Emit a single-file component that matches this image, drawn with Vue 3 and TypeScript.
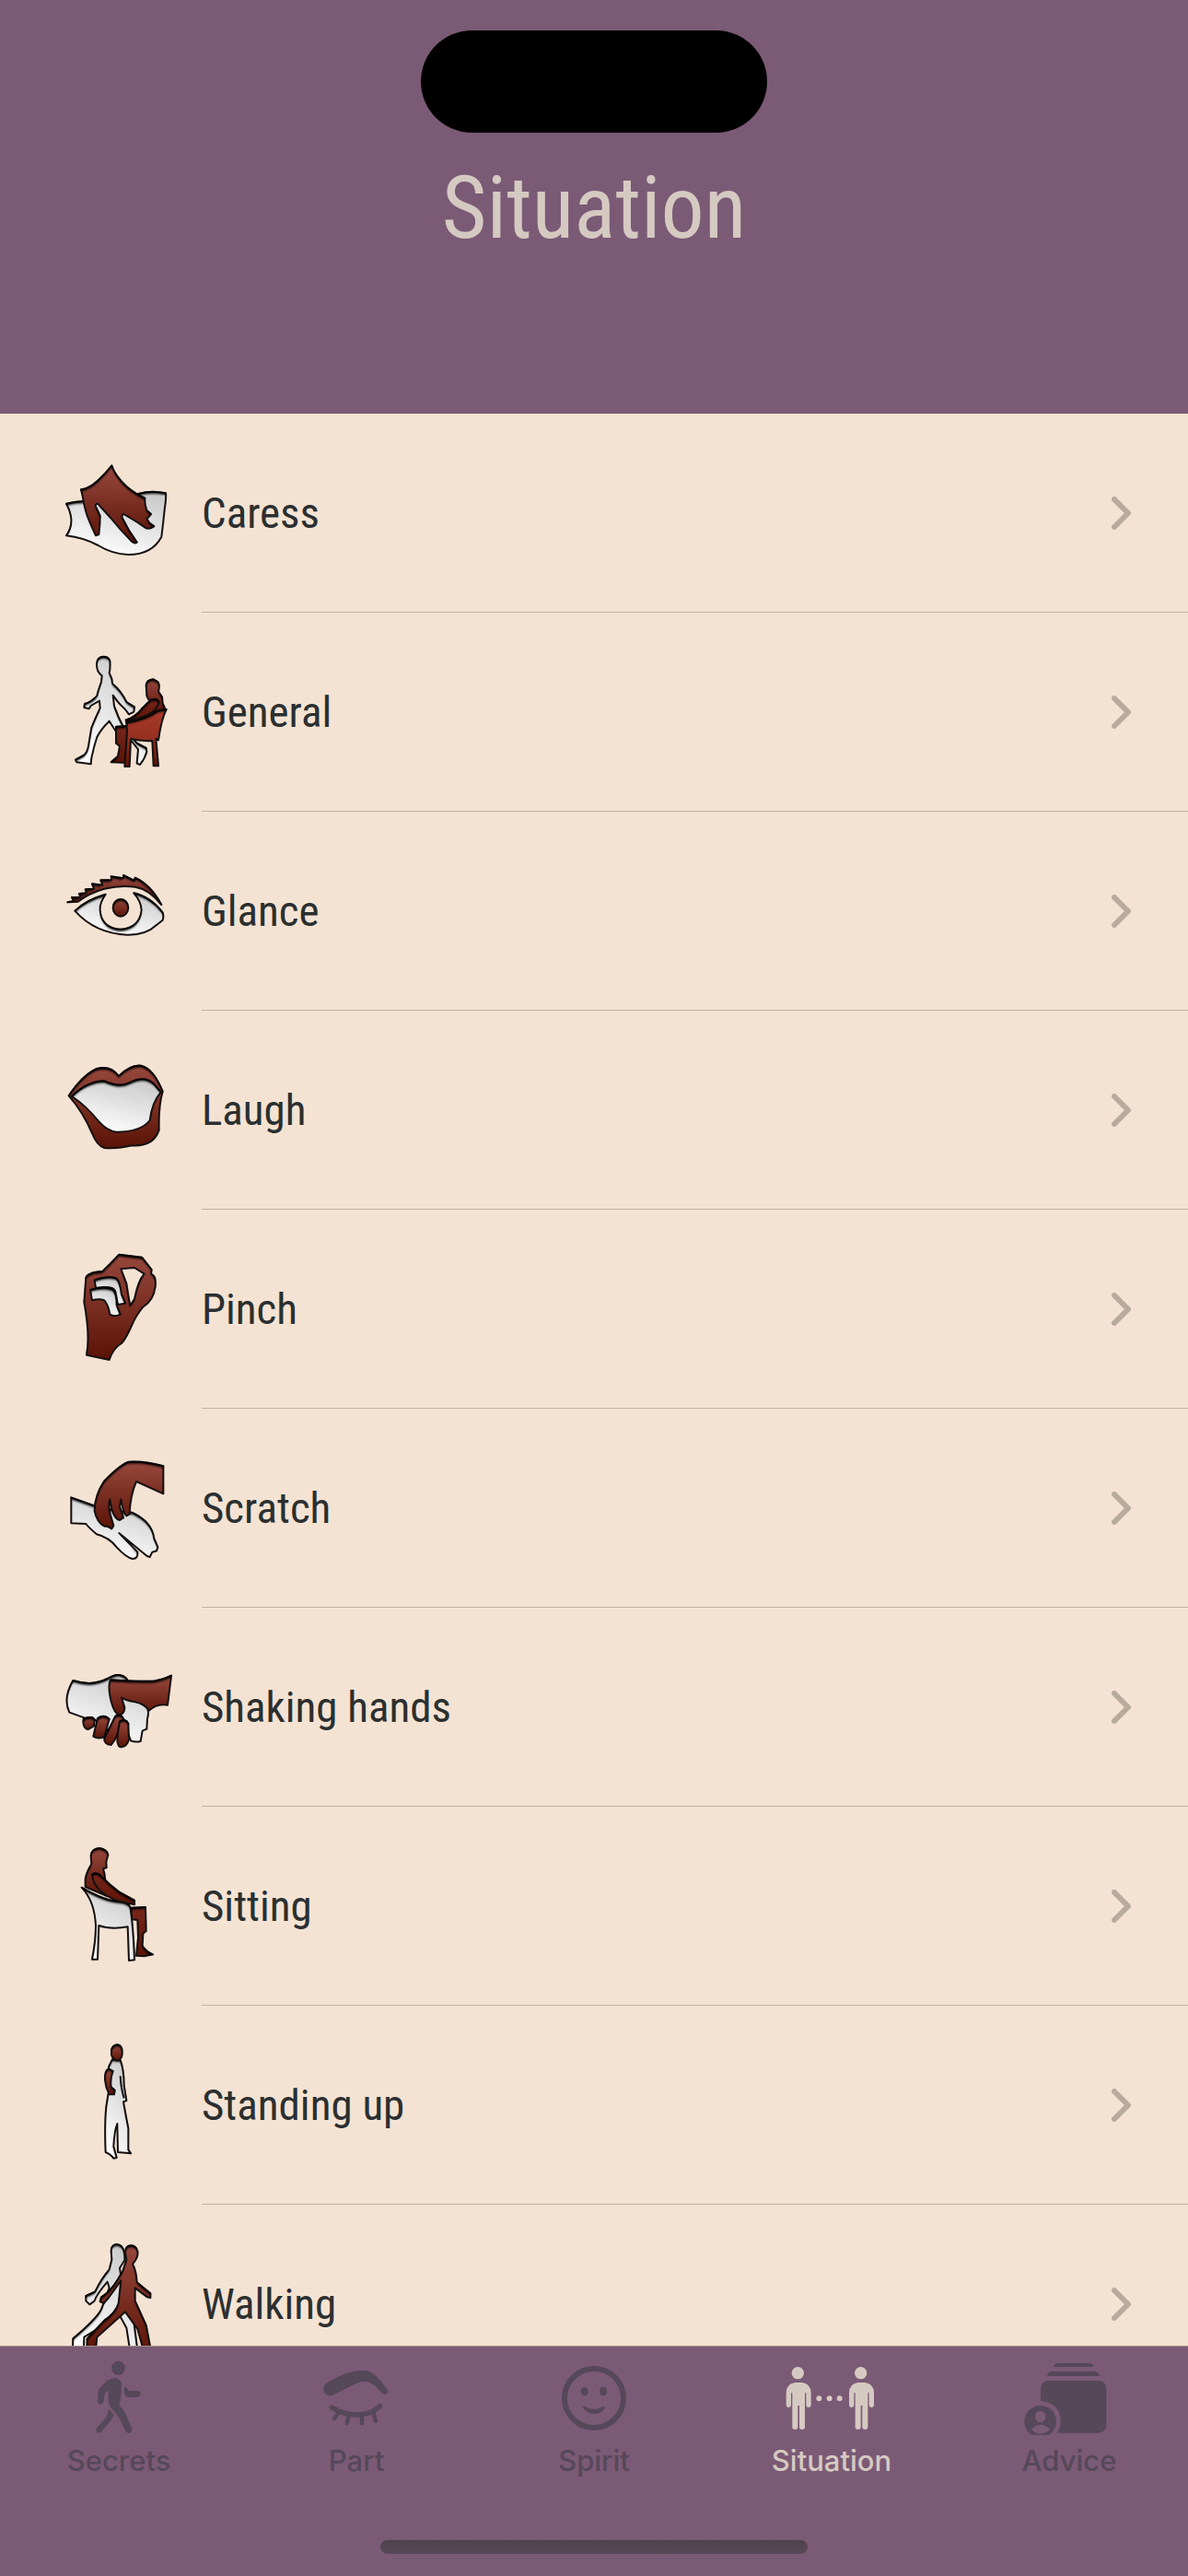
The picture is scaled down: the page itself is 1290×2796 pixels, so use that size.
<script setup lang="ts">
import { ref } from 'vue'

type Paint = 'brown' | 'white' | 'red' | 'deep' | 'line'
interface Shape { paint: Paint; d: string }
interface Situation { name: string; top: number; shapes: Shape[] }
interface Tab { name: string; box: string; d: string; strokes?: { d: string; w: number }[] }

// Illustrations are drawn on a 480 x 648 grid; `top` is the first grid line of each one.
const situations: Situation[] = [
  {
    name: 'Caress', top: -93, shapes: [
      { paint: 'white', d: 'M66 200 Q90 194 120 192 L300 168 Q345 156 390 166 Q392 180 386 220 Q382 260 376 308 Q345 366 268 366 Q215 364 170 336 Q120 310 66 304 Q84 280 82 250 Q80 225 66 200Z' },
      { paint: 'brown', d: 'M214 76 Q225 110 262 144 Q290 168 322 182 Q320 200 328 222 L342 234 Q336 244 328 248 L336 262 L352 274 Q340 284 326 280 L300 262 Q270 244 252 234 Q246 236 248 246 L272 290 L296 326 Q290 332 280 324 Q240 284 210 246 L168 200 Q160 200 162 210 L176 240 Q176 270 172 300 L162 304 Q150 280 134 240 Q122 200 120 180 L114 154 Q140 152 170 124 Q195 100 214 76Z' },
    ],
  },
  {
    name: 'General', top: 555, shapes: [
      { paint: 'white', d: 'M186 698 Q166 700 165 722 Q164 748 182 760 L180 780 L170 810 L166 826 Q150 844 126 852 L124 864 L140 868 L146 858 L174 842 L176 866 Q160 900 148 930 L138 990 Q134 1012 122 1020 L96 1034 L100 1042 L146 1048 L148 1028 Q156 990 166 960 Q178 935 206 908 Q220 930 230 945 Q255 955 280 975 L300 1000 L296 1046 L306 1050 Q322 1030 328 1008 L326 996 L296 980 Q270 950 256 935 Q236 900 222 860 L218 824 Q235 850 258 870 L270 886 L286 878 L288 862 L262 846 Q245 810 216 786 L214 770 L206 752 Q210 735 208 712 Q204 698 186 698Z' },
      { paint: 'brown', d: 'M350 772 Q328 774 326 790 L328 826 L334 838 L344 840 Q350 870 350 880 L388 868 L380 850 L378 830 L366 812 Q372 790 364 780Z' },
      { paint: 'deep', d: 'M228 926 L266 924 L262 1044 L212 1042 L234 1022 L240 990 L228 980Z' },
      { paint: 'red', d: 'M262 912 Q330 900 364 874 L392 870 Q376 900 366 970 L358 966 L366 1054 L350 1054 L346 972 Q310 974 276 966 L272 1056 L256 1056 L264 940Z' },
      { paint: 'deep', d: 'M340 840 Q358 830 368 845 Q366 862 345 880 Q320 895 285 902 L262 912 L260 904 Q290 895 310 870Z' },
    ],
  },
  {
    name: 'Glance', top: -57, shapes: [
      { paint: 'brown', d: 'M70 238 L90 234 L84 222 L112 222 L108 210 L132 208 L128 196 L156 194 L150 178 L184 182 L178 166 L214 166 L212 154 L252 160 L252 150 L288 168 L290 158 Q340 180 376 246 Q335 195 290 188 Q240 182 190 194 Q140 208 104 236Z' },
      { paint: 'white', d: 'M94 266 Q130 230 194 212 Q174 240 176 264 Q180 322 242 326 Q305 322 311 264 Q310 235 286 208 Q340 220 380 272 Q384 284 380 296 L360 312 Q325 345 265 344 Q160 340 94 266Z' },
      { paint: 'brown', d: 'M218 256 A25 28 0 0 1 268 256 A25 28 0 0 1 218 256Z' },
    ],
  },
  {
    name: 'Laugh', top: 591, shapes: [
      { paint: 'brown', d: 'M74 868 Q120 800 165 780 Q210 768 237 804 Q275 766 310 770 Q350 780 380 854 Q366 900 368 980 Q350 1034 280 1030 Q230 1042 190 1038 Q165 1030 150 990 Q120 920 74 868Z' },
      { paint: 'white', d: 'M84 870 Q135 820 190 820 Q240 842 270 826 Q320 800 350 828 L374 856 Q345 890 338 948 Q310 985 230 986 Q200 984 170 950 Q130 900 84 870Z' },
    ],
  },
  {
    name: 'Pinch', top: -51, shapes: [
      { paint: 'brown', d: 'M238 95 L312 104 L344 144 L342 158 Q360 165 356 200 Q350 245 316 266 Q295 290 280 324 Q262 365 248 382 Q218 400 206 438 L132 422 Q140 380 134 320 Q130 280 124 250 L130 170 Q138 152 184 150 Q210 125 238 95Z M244 142 L288 138 L320 158 Q300 180 288 240 L274 262 Q268 230 262 190Z' },
      { paint: 'white', d: 'M158 178 Q200 164 228 172 Q240 180 246 225 L258 254 L234 258 L226 215 Q220 195 162 204Z' },
      { paint: 'white', d: 'M144 210 Q190 198 216 208 Q230 220 230 260 L242 290 Q222 300 208 290 Q204 262 190 244 Q175 238 150 244Z' },
    ],
  },
  {
    name: 'Scratch', top: 597, shapes: [
      { paint: 'white', d: 'M82 886 L160 914 L230 930 L280 935 Q345 965 352 1020 L364 1048 L360 1060 L346 1064 L338 1080 Q328 1078 318 1068 L238 1002 L298 1064 Q300 1086 282 1086 Q262 1082 230 1048 Q205 1016 165 1006 Q140 985 130 972 L82 970Z' },
      { paint: 'brown', d: 'M382 784 Q320 766 270 770 Q245 776 190 832 Q158 880 158 930 Q166 968 190 980 Q200 978 214 988 L220 978 L206 930 Q204 900 208 892 L214 925 Q225 958 240 960 L252 952 L240 915 L244 892 Q252 940 262 946 L272 940 Q274 880 294 834 L382 874Z' },
    ],
  },
  {
    name: 'Shaking hands', top: 555, shapes: [
      { paint: 'white', d: 'M88 792 Q150 812 200 786 Q240 762 262 786 L330 880 Q336 900 330 915 L328 950 L314 956 L308 990 Q290 994 276 988 L262 950 L240 905 L200 955 L150 912 L126 914 L76 896 Q54 850 88 792Z' },
      { paint: 'brown', d: 'M210 790 Q310 796 350 794 Q385 788 408 776 L396 872 Q360 866 336 890 Q320 868 290 862 Q262 858 246 848 L256 880 Q256 900 240 905 Q222 900 212 860 Q200 810 210 790Z' },
      { paint: 'brown', d: 'M122 918 Q150 905 158 920 L156 940 L136 952 Q118 945 122 918Z' },
      { paint: 'brown', d: 'M168 915 Q190 900 206 918 L190 975 Q170 984 154 974Z' },
      { paint: 'brown', d: 'M226 908 Q245 898 254 920 L224 985 L212 1002 Q188 1000 190 980Z' },
      { paint: 'brown', d: 'M240 925 Q260 915 268 932 L270 985 Q262 1012 240 1008 Q228 1000 234 960Z' },
    ],
  },
  {
    name: 'Sitting', top: -57, shapes: [
      { paint: 'brown', d: 'M172 78 Q148 80 146 104 L148 130 Q130 160 128 180 L128 204 L200 235 L190 160 L186 145 L197 142 L196 122 L202 100 Q198 80 172 78Z' },
      { paint: 'deep', d: 'M278 272 L324 270 L326 348 L316 356 L314 396 Q325 415 348 424 L320 430 L294 428 L300 370 L298 312 L278 310Z' },
      { paint: 'white', d: 'M116 206 Q190 250 240 252 Q268 255 274 270 Q284 330 288 442 L270 444 L266 334 Q210 344 172 330 L168 440 L150 440 Q162 380 162 330 Q158 250 116 206Z' },
      { paint: 'deep', d: 'M150 164 Q166 154 180 170 Q210 200 240 222 L288 248 L288 262 L270 258 Q210 248 180 220 Q150 190 150 164Z' },
    ],
  },
  {
    name: 'Standing up', top: 591, shapes: [
      { paint: 'white', d: 'M216 766 L242 768 Q254 800 254 850 L262 900 L252 904 Q260 950 268 990 L268 1060 L276 1072 Q255 1070 234 1068 L232 975 Q222 1000 220 1050 L230 1086 L220 1088 Q212 1076 194 1068 Q190 980 196 920 L204 870 L204 790Z' },
      { paint: 'line', d: 'M242 820 Q244 860 254 892' },
      { paint: 'brown', d: 'M232 718 Q212 720 212 745 Q214 766 232 770 Q250 764 248 742 Q248 720 232 718Z' },
      { paint: 'brown', d: 'M204 796 L218 804 Q208 830 212 856 L224 866 L222 880 L206 880 Q190 850 192 820 Q194 800 204 796Z' },
    ],
  },
  {
    name: 'Walking', top: -21, shapes: [
      { paint: 'white', d: 'M230 108 Q212 110 212 130 L214 158 L206 190 Q180 220 160 262 L130 276 L130 292 L142 304 L158 292 Q164 272 200 230 L206 250 L180 320 Q165 350 88 415 L86 470 L122 470 L124 410 L190 370 L240 340 L262 380 L276 470 L300 470 L286 360 L250 250 L240 185 L256 160 Q258 110 230 108Z' },
      { paint: 'brown', d: 'M275 112 Q258 114 258 135 L262 158 L250 195 L232 225 Q210 262 180 280 L176 294 L188 300 L204 282 L244 226 L236 300 Q228 330 190 356 L134 415 L132 470 L160 470 L166 410 L258 328 L298 384 L322 470 L345 470 L326 372 L290 292 L290 250 L330 280 L340 282 L340 268 L296 232 Q294 195 282 172 Q302 150 298 130 Q292 110 275 112Z' },
    ],
  },
]

const person = (x: number): string =>
  `M${x - 20} 107 a20 20 0 1 1 40 0 a20 20 0 1 1 -40 0Z ` +
  `M${x - 14} 138 h28 q29 4 29 34 V210 q0 9 -8 9 q-8 0 -8 -9 V172 h-4 V283 q0 8 -9 8 q-9 0 -9 -8 V213 h-5 V283 q0 8 -9 8 q-9 0 -9 -8 V172 h-4 V210 q0 9 -8 9 q-8 0 -8 -9 V172 q0 -30 29 -34Z`
const dot = (x: number): string => `M${x - 9} 190 a9 9 0 1 1 18 0 a9 9 0 1 1 -18 0Z`

const tabs: Tab[] = [
  {
    name: 'Secrets', box: '207 21 360 288',
    d: 'M363 91 a22.5 22.5 0 1 1 45 0 a22.5 22.5 0 1 1 -45 0Z M350 131 Q375 115 390 130 Q397 136 396 150 L393 192 Q390 206 388 212 Q400 222 408 238 L430 288 Q432 302 418 303 Q411 302 408 295 L386 250 L360 218 Q352 208 353 195 L354 164 L341 173 L337 202 Q334 210 327 209 Q318 208 318 200 L320 168 Q322 160 328 154 Q340 140 350 131Z M405 149 L421 165 H448 Q458 166 458 175 Q457 185 448 186 H420 Q404 184 405 168Z M354 223 L371 244 Q368 254 362 260 L331 298 Q324 305 316 300 Q310 294 315 286 L344 254 Q352 240 354 223Z',
  },
  {
    name: 'Part', box: '981 21 360 288',
    d: 'M1064 139 Q1130 98 1185 98 Q1212 100 1232 124 Q1248 140 1263 163 Q1266 176 1254 177 Q1247 177 1240 168 Q1214 137 1192 135 Q1172 134 1146 148 L1090 176 Q1070 187 1058 173 Q1047 152 1064 139Z',
    strokes: [
      { d: 'M1082 220 Q1120 243 1162 243 Q1210 244 1237 215', w: 17 },
      { d: 'M1104 236 L1089 255 M1136 246 L1130 270 M1179 248 V271 M1217 238 L1224 263', w: 13 },
    ],
  },
  {
    name: 'Spirit', box: '75 21 360 288',
    d: 'M212 167 a12 14 0 1 1 24 0 a12 14 0 1 1 -24 0Z M273 167 a12 14 0 1 1 24 0 a12 14 0 1 1 -24 0Z M219 220 Q218 214 225 216 Q255 234 284 216 Q292 214 290 221 Q280 240 255 240 Q230 240 219 220Z',
    strokes: [{ d: 'M159 189 a96 96 0 1 1 192 0 a96 96 0 1 1 -192 0Z', w: 18 }],
  },
  {
    name: 'Situation', box: '852 21 360 288',
    d: [person(922), person(1127), dot(991), dot(1025), dot(1058)].join(' '),
  },
  {
    name: 'Advice', box: '153 741 360 288',
    d: 'M282 807 Q284 795 296 795 H398 Q410 795 411 807Z M261 837 Q264 822 277 822 H416 Q429 822 432 837Z M240 918 V880 Q240 852 268 852 H426 Q454 852 454 880 V994 Q454 1022 426 1022 H293 Q305 1005 305 984 Q304 925 240 918Z M187 985 a52 52 0 1 1 104 0 a52 52 0 1 1 -104 0Z M222 969 a17 19 0 1 0 34 0 a17 19 0 1 0 -34 0Z M209 1011 Q238 1040 271 1011 Q240 980 209 1011Z',
  },
]

const active = ref('Situation')
</script>

<template>
  <div class="screen">
    <svg class="defs" aria-hidden="true">
      <defs>
        <linearGradient id="brown" x1="0" y1="0" x2="0" y2="1">
          <stop offset="0" stop-color="#98483d" /><stop offset="1" stop-color="#5a1306" />
        </linearGradient>
        <linearGradient id="white" x1="0.7" y1="0" x2="0.3" y2="1">
          <stop offset="0" stop-color="#cbcbcb" /><stop offset="1" stop-color="#ffffff" />
        </linearGradient>
        <linearGradient id="red" x1="0" y1="0" x2="0" y2="1">
          <stop offset="0" stop-color="#a83c2b" /><stop offset="0.5" stop-color="#96301f" /><stop offset="1" stop-color="#5a1306" />
        </linearGradient>
        <linearGradient id="deep" x1="0" y1="0" x2="0" y2="1">
          <stop offset="0" stop-color="#78261a" /><stop offset="1" stop-color="#5a1306" />
        </linearGradient>
        <filter id="inset" x="-5%" y="-5%" width="110%" height="110%" color-interpolation-filters="sRGB">
          <feOffset in="SourceAlpha" dy="8" result="shifted" />
          <feComposite in="SourceAlpha" in2="shifted" operator="out" result="edge" />
          <feGaussianBlur in="edge" stdDeviation="3" result="soft" />
          <feComposite in="soft" in2="SourceAlpha" operator="in" result="shade" />
          <feMerge><feMergeNode in="SourceGraphic" /><feMergeNode in="shade" /></feMerge>
        </filter>
      </defs>
    </svg>

    <header class="header">
      <div class="island"></div>
      <h1>Situation</h1>
    </header>

    <main class="list">
      <a v-for="s in situations" :key="s.name" class="row" href="#">
        <svg class="picture" :viewBox="`0 ${s.top} 480 648`" aria-hidden="true">
          <path v-for="(p, i) in s.shapes" :key="i" :class="['shape', p.paint]" :d="p.d" />
        </svg>
        <span class="cell">
          <span class="name">{{ s.name }}</span>
          <svg class="chevron" viewBox="0 0 22 36" aria-hidden="true"><path d="M3 3 L18 18 L3 33" /></svg>
        </span>
      </a>
    </main>

    <footer class="bar">
      <nav class="tabs">
        <button v-for="t in tabs" :key="t.name" type="button" :class="['tab', { active: active === t.name }]" @click="active = t.name">
          <svg class="glyph" :viewBox="t.box" aria-hidden="true">
            <path :d="t.d" fill="currentColor" fill-rule="evenodd" />
            <path v-for="(k, i) in t.strokes" :key="i" :d="k.d" fill="none" stroke="currentColor" :stroke-width="k.w" stroke-linecap="round" />
          </svg>
          <span>{{ t.name }}</span>
        </button>
      </nav>
      <div class="home"></div>
    </footer>
  </div>
</template>

<style>
body { margin: 0; background: #7b5a76; }
</style>

<style scoped>
.screen { display: flex; flex-direction: column; height: 100vh; background: #f4e3d3; font-family: "Avenir Next Condensed", "Roboto Condensed", Lato, sans-serif; }
.defs { position: absolute; width: 0; height: 0; }
.header { flex: none; display: flex; flex-direction: column; align-items: center; box-sizing: border-box; height: 449px; padding-top: 33px; background: #7b5a76; }
.island { width: 376px; height: 111px; border-radius: 56px; background: #000; }
h1 { margin: 20px 0 0; font-size: 94px; line-height: 124px; font-weight: 400; color: #d5cac1; }
.list { flex: 1; min-height: 0; overflow-y: auto; scrollbar-width: none; }
.row { display: flex; height: 216px; padding-left: 50px; gap: 9px; color: #2b2f30; text-decoration: none; }
.picture { flex: none; width: 160px; height: 216px; }
.shape { stroke: #151010; stroke-width: 6; stroke-linejoin: round; fill-rule: evenodd; filter: url(#inset); }
.brown { fill: url(#brown); }
.white { fill: url(#white); }
.red { fill: url(#red); }
.deep { fill: url(#deep); }
.line { fill: none; filter: none; }
.cell { flex: 1; display: flex; align-items: center; justify-content: space-between; box-sizing: border-box; padding-right: 61px; border-bottom: 1px solid #beb1a7; }
.name { font-size: 47px; line-height: 64px; font-weight: 400; }
.chevron { width: 22px; height: 36px; fill: none; stroke: #b9ab9c; stroke-width: 6; stroke-linecap: round; stroke-linejoin: round; }
.bar { flex: none; display: flex; flex-direction: column; align-items: center; justify-content: space-between; box-sizing: border-box; height: 250px; padding-bottom: 24px; border-top: 1px solid #a09287; background: #7b5a76; }
.tabs { display: flex; width: 100%; }
.tab { flex: 1; display: flex; flex-direction: column; align-items: center; gap: 8px; padding: 0; border: 0; background: none; color: #554858; font-family: Inter, sans-serif; font-size: 31px; line-height: 40px; font-weight: 500; }
.tab.active { color: #d5cac1; }
.glyph { width: 120px; height: 96px; }
.home { width: 36%; height: 15px; border-radius: 8px; background: linear-gradient(#4f424a, #574a57); }
</style>
